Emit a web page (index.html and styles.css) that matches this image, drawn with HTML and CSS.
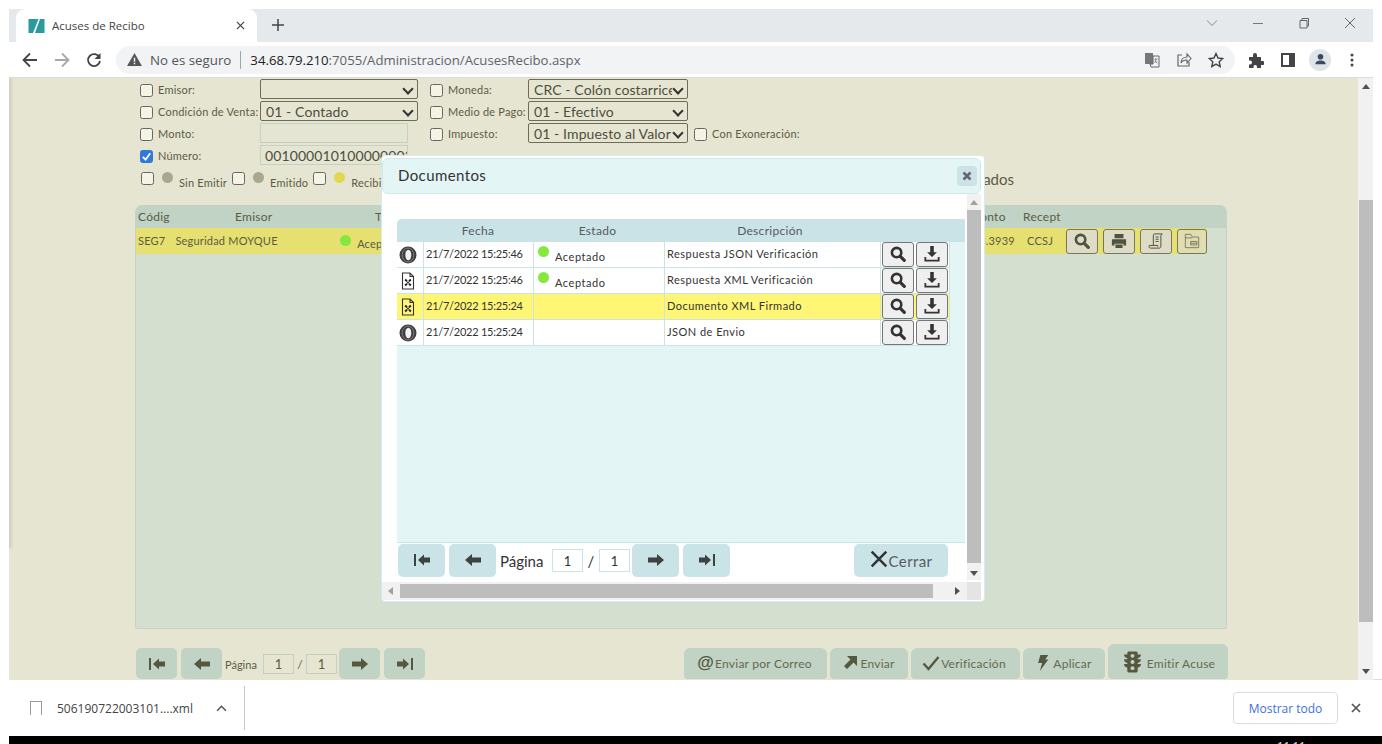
FILE: index.html
```html
<!DOCTYPE html>
<html lang="es">
<head>
<meta charset="utf-8">
<title>Acuses de Recibo</title>
<link rel="stylesheet" href="styles.css">
</head>
<body>
<svg class="defs" aria-hidden="true">
  <symbol id="i-search" viewBox="0 0 16 16"><circle cx="6.6" cy="6.6" r="4.7" fill="none" stroke="currentColor" stroke-width="2.6"/><path d="M10.3 10.3l4 4" stroke="currentColor" stroke-width="3.2" stroke-linecap="round"/></symbol>
  <symbol id="i-down" viewBox="0 0 18 18"><path d="M7 0h4v7h3.500L9 12.500 3.500 7H7z" fill="currentColor"/><path d="M1.500 12.500v4h15v-4" fill="none" stroke="currentColor" stroke-width="2"/></symbol>
  <symbol id="i-first" viewBox="0 0 18 16"><path d="M1 2h2v12H1z M5 8l6-5.500V5.500h6v5h-6v3z" fill="currentColor"/></symbol>
  <symbol id="i-prev" viewBox="0 0 18 16"><path d="M1 8l7-6v3.500h9v5H8V14z" fill="currentColor"/></symbol>
  <symbol id="i-next" viewBox="0 0 18 16"><path d="M17 8l-7-6v3.500H1v5h9V14z" fill="currentColor"/></symbol>
  <symbol id="i-last" viewBox="0 0 18 16"><path d="M17 2h-2v12h2z M13 8L7 2.500V5.500H1v5h6v3z" fill="currentColor"/></symbol>
  <symbol id="i-json" viewBox="0 0 18 18"><circle cx="9" cy="9" r="8.500" fill="#3f3f3f"/><ellipse cx="9" cy="9" rx="5.800" ry="7" fill="none" stroke="#8a8a8a" stroke-width=".8"/><ellipse cx="9.300" cy="9" rx="3" ry="5.200" fill="#f2f2f2"/></symbol>
  <symbol id="i-xml" viewBox="0 0 14 18"><path d="M1.500 1h7.500l3.500 3.500v12.500h-11zM9 1v3.500h3.500" fill="none" stroke="#333" stroke-width="1.100"/><path d="M4.200 7.500l1.800 1.800M9.800 7.500L8 9.300M4.200 13.500L6 11.700M9.800 13.500L8 11.700" stroke="#1d1d1d" stroke-width="1.900"/><circle cx="7" cy="10.500" r="1" fill="#1d1d1d"/></symbol>
  <symbol id="i-print" viewBox="0 0 18 18"><path d="M4 1h10v5H4z M1 7h16v7h-3v-2H4v2H1z M5 13h8v4H5z" fill="currentColor"/></symbol>
  <symbol id="i-bill" viewBox="0 0 18 18"><path d="M6 14V2.500C6 1.500 6.500 1 7.500 1H16l-1.500 2v12c0 1.500-1 2-2 2H3c-1.200 0-2-.8-2-2 0-.5.300-1 1-1h9v1.500M8.500 4.500H12M8.500 7H12M8.500 9.500H12" fill="none" stroke="currentColor" stroke-width="1.100"/></symbol>
  <symbol id="i-folder" viewBox="0 0 18 18"><path d="M1.500 16.500V1.500h6l2 3h7v12zM1.500 5.500h8M7.500 9.500h7v4h-7zM7.500 11.500h7" fill="none" stroke="currentColor" stroke-width="1"/></symbol>
  <symbol id="i-share" viewBox="0 0 14 14"><path d="M4 0h10v10l-3.500-3.500L4 13 1 10l6.500-6.500z" fill="currentColor"/></symbol>
  <symbol id="i-check" viewBox="0 0 18 16"><path d="M1.500 8.500l5 5.500L16.500 2" fill="none" stroke="currentColor" stroke-width="2.400"/></symbol>
  <symbol id="i-bolt" viewBox="0 0 14 18"><path d="M4 0h9L9.500 5H13L3.500 18l2.500-9H1.500z" fill="currentColor"/></symbol>
  <symbol id="i-light" viewBox="0 0 18 22"><path d="M0 3h3.500V1.500C3.500.7 4.200 0 5 0h8c.8 0 1.500.7 1.500 1.500V3H18c0 2-1.500 3.500-3.500 3.800V8H18c0 2-1.500 3.500-3.500 3.800V13H18c0 2-1.500 3.500-3.500 3.800v3.700c0 .8-.7 1.500-1.500 1.500H5c-.8 0-1.500-.7-1.500-1.500v-3.700C1.500 16.500 0 15 0 13h3.500v-1.200C1.500 11.500 0 10 0 8h3.500V6.800C1.500 6.500 0 5 0 3z" fill="currentColor"/><circle cx="9" cy="4.500" r="2.100" fill="#c0d3c5"/><circle cx="9" cy="11" r="2.100" fill="#c0d3c5"/><circle cx="9" cy="17.500" r="2.100" fill="#c0d3c5"/></symbol>
  <symbol id="i-x" viewBox="0 0 16 16"><path d="M1.500 1.500l13 13M14.500 1.500l-13 13" stroke="currentColor" stroke-width="2.200" fill="none"/></symbol>
</svg>

<div class="tabstrip">
  <div class="tab">
    <svg class="favicon" viewBox="0 0 16 16"><path d="M0 1h10L4.500 15H0z" fill="#2a9a9e"/><path d="M11.500 1H16v14H6.500z" fill="#2a9a9e"/></svg>
    <span class="tab-title">Acuses de Recibo</span>
    <svg class="tab-close" viewBox="0 0 10 10"><path d="M1 1l8 8M9 1L1 9" stroke="#444" stroke-width="1.400"/></svg>
  </div>
  <svg class="new-tab" viewBox="0 0 12 12"><path d="M6 0v12M0 6h12" stroke="#444" stroke-width="1.500"/></svg>
  <div class="winctl">
    <svg viewBox="0 0 12 12"><path d="M1 3.500l5 5 5-5" fill="none" stroke="#888" stroke-width="1"/></svg>
    <svg viewBox="0 0 12 12"><path d="M1 6.500h10" stroke="#777" stroke-width="1"/></svg>
    <svg viewBox="0 0 12 12"><path d="M2 3.500h7v7.500H2zM4 3.500V1.500h6.500V9H9" fill="none" stroke="#666" stroke-width="1"/></svg>
    <svg viewBox="0 0 12 12"><path d="M1 1l10 10M11 1L1 11" stroke="#666" stroke-width="1"/></svg>
  </div>
</div>

<div class="toolbar">
  <svg class="nav-ic" viewBox="0 0 16 16"><path d="M15 8H2M8 1.500L1.500 8 8 14.500" fill="none" stroke="#444" stroke-width="1.800"/></svg>
  <svg class="nav-ic" viewBox="0 0 16 16"><path d="M1 8h13M8 1.500L14.500 8 8 14.500" fill="none" stroke="#a8a8a8" stroke-width="1.800"/></svg>
  <svg class="nav-ic" viewBox="0 0 16 16"><path d="M13.500 5.500A6 6 0 1 0 14 9" fill="none" stroke="#444" stroke-width="1.800"/><path d="M14.500 1v6h-6z" fill="#444"/></svg>
  <div class="omnibox">
    <svg class="warn" viewBox="0 0 16 14"><path d="M8 0l8 14H0z" fill="#555"/><path d="M7.200 5h1.600v4.500H7.200zM7.200 10.500h1.600V12H7.200z" fill="#f1f3f4"/></svg>
    <span class="insecure">No es seguro</span>
    <span class="sep"></span>
    <span class="url"><b>34.68.79.210</b>:7055/Administracion/AcusesRecibo.aspx</span>
    <span class="omni-right">
      <svg viewBox="0 0 16 16"><path d="M1 1h8v11H1z" fill="#777"/><path d="M9 4h6v11H7l-1-3h3z" fill="none" stroke="#666"/><path d="M10.500 7h3M12 7c0 2-1 3.500-1.500 4M11 8.500c.5 1 1.500 2 2.500 2.500" fill="none" stroke="#666" stroke-width=".8"/></svg>
      <svg viewBox="0 0 16 16"><path d="M6 3H2v11h11v-4" fill="none" stroke="#666" stroke-width="1.200"/><path d="M5 11c0-4 3-6 6-6V2l4 4.500L11 11V8c-3 0-5 1-6 3z" fill="none" stroke="#666" stroke-width="1.100"/></svg>
      <svg viewBox="0 0 16 16"><path d="M8 1.500l2 4.500 4.800.5-3.600 3.200 1 4.800L8 12.100l-4.200 2.400 1-4.800L1.200 6.500 6 6z" fill="none" stroke="#444" stroke-width="1.400"/></svg>
    </span>
  </div>
  <div class="tool-right">
    <svg viewBox="0 0 16 16"><path d="M1 5h4V3a2 2 0 0 1 4 0v2h4v4h1.500a2 2 0 0 1 0 4H13v3H9v-1.500a1.800 1.800 0 0 0-3.500 0V16H1v-3.500h1a2 2 0 0 0 0-4H1z" fill="#444"/></svg>
    <svg viewBox="0 0 16 16"><path d="M2 2h12v12H2z" fill="none" stroke="#444" stroke-width="2"/><path d="M9 2h5v12H9z" fill="#444"/></svg>
    <span class="avatar"><svg viewBox="0 0 16 16"><circle cx="8" cy="5" r="3" fill="#3c4a5e"/><path d="M2.500 13c0-3 3-4 5.500-4s5.500 1 5.500 4z" fill="#3c4a5e"/></svg></span>
    <svg viewBox="0 0 16 16"><circle cx="8" cy="3" r="1.500" fill="#444"/><circle cx="8" cy="8" r="1.500" fill="#444"/><circle cx="8" cy="13" r="1.500" fill="#444"/></svg>
  </div>
</div>

<div class="viewport">
  <main class="page">
    <div class="filters">
      <label class="flabel"><span class="check"></span>Emisor:</label>
      <div class="fcell"><div class="select"><span></span></div></div>
      <label class="flabel"><span class="check"></span>Moneda:</label>
      <div class="select"><span>CRC - Colón costarricense</span></div>
      <span></span>

      <label class="flabel"><span class="check"></span>Condición de Venta:</label>
      <div class="fcell"><div class="select"><span>01 - Contado</span></div></div>
      <label class="flabel"><span class="check"></span>Medio de Pago:</label>
      <div class="select"><span>01 - Efectivo</span></div>
      <span></span>

      <label class="flabel"><span class="check"></span>Monto:</label>
      <div class="fcell"><div class="input"></div></div>
      <label class="flabel"><span class="check"></span>Impuesto:</label>
      <div class="select"><span>01 - Impuesto al Valor Agregado</span></div>
      <label class="flabel"><span class="check"></span>Con Exoneración:</label>

      <label class="flabel"><span class="check checked"><svg viewBox="0 0 12 12"><path d="M2 6.500l3 3 5-7" fill="none" stroke="#fff" stroke-width="2"/></svg></span>Número:</label>
      <div class="fcell"><div class="input"><span>00100001010000000370</span></div></div>
    </div>

    <div class="states">
      <span class="check"></span><span class="dot dot-grey"></span><span class="state-label">Sin Emitir</span>
      <span class="check"></span><span class="dot dot-grey"></span><span class="state-label">Emitido</span>
      <span class="check"></span><span class="dot dot-yellow"></span><span class="state-label">Recibido</span>
      <span class="results">Resultados</span>
    </div>

    <section class="panel">
      <div class="panel-head">
        <span class="c-code">Códig</span><span class="c-emisor">Emisor</span><span class="c-tipo">Tipo</span><span class="c-monto">Monto</span><span class="c-recept">Recept</span>
      </div>
      <div class="panel-row">
        <span class="c-code">SEG7</span><span class="c-seller">Seguridad MOYQUE</span><span class="c-status"><span class="dot dot-green"></span><span class="status-text">Aceptado</span></span><span class="c-amount">3.3939</span><span class="c-rec">CCSJ</span>
        <span class="row-actions">
          <span class="act"><svg><use href="#i-search"/></svg></span>
          <span class="act"><svg><use href="#i-print"/></svg></span>
          <span class="act"><svg><use href="#i-bill"/></svg></span>
          <span class="act act-light"><svg><use href="#i-folder"/></svg></span>
        </span>
      </div>
    </section>

    <footer class="bottom">
      <span class="pbtn"><svg><use href="#i-first"/></svg></span>
      <span class="pbtn"><svg><use href="#i-prev"/></svg></span>
      <span class="plabel">Página</span>
      <span class="pinput">1</span><span class="pslash">/</span><span class="pinput">1</span>
      <span class="pbtn pbtn-next"><svg><use href="#i-next"/></svg></span>
      <span class="pbtn"><svg><use href="#i-last"/></svg></span>
      <span class="actions">
        <span class="abtn a1"><span class="at">@</span>Enviar por Correo</span>
        <span class="abtn a2"><svg class="ic14"><use href="#i-share"/></svg>Enviar</span>
        <span class="abtn a3"><svg class="ic16"><use href="#i-check"/></svg>Verificación</span>
        <span class="abtn a4"><svg class="ic14"><use href="#i-bolt"/></svg>Aplicar</span>
        <span class="abtn a5"><svg class="ic-light"><use href="#i-light"/></svg>Emitir Acuse</span>
      </span>
    </footer>
  </main>

  <div class="scrollbar">
    <span class="arrow-up"></span>
    <span class="thumb"></span>
    <span class="arrow-down"></span>
  </div>

  <div class="modal">
    <header class="modal-head">
      <span class="modal-title">Documentos</span>
      <span class="modal-close"><svg viewBox="0 0 10 10"><path d="M1.500 1.500l7 7M8.500 1.500l-7 7" stroke="#667" stroke-width="2.600"/></svg></span>
    </header>
    <div class="modal-mid">
      <div class="modal-body">
        <div class="doc-area">
          <div class="doc-head"><span></span><span>Fecha</span><span>Estado</span><span>Descripción</span></div>
          <div class="doc-row">
            <span class="cell cell-ic"><svg class="ic18"><use href="#i-json"/></svg></span>
            <span class="cell cell-date">21/7/2022 15:25:46</span>
            <span class="cell cell-st"><span class="dot dot-green"></span><span class="st-text">Aceptado</span></span>
            <span class="cell cell-desc">Respuesta JSON Verificación</span>
            <span class="cell cell-btn"><span class="rbtn"><svg><use href="#i-search"/></svg></span><span class="rbtn"><svg><use href="#i-down"/></svg></span></span>
          </div>
          <div class="doc-row">
            <span class="cell cell-ic"><svg class="ic-xml"><use href="#i-xml"/></svg></span>
            <span class="cell cell-date">21/7/2022 15:25:46</span>
            <span class="cell cell-st"><span class="dot dot-green"></span><span class="st-text">Aceptado</span></span>
            <span class="cell cell-desc">Respuesta XML Verificación</span>
            <span class="cell cell-btn"><span class="rbtn"><svg><use href="#i-search"/></svg></span><span class="rbtn"><svg><use href="#i-down"/></svg></span></span>
          </div>
          <div class="doc-row doc-row-sel">
            <span class="cell cell-ic"><svg class="ic-xml"><use href="#i-xml"/></svg></span>
            <span class="cell cell-date">21/7/2022 15:25:24</span>
            <span class="cell"></span>
            <span class="cell cell-desc">Documento XML Firmado</span>
            <span class="cell cell-btn"><span class="rbtn"><svg><use href="#i-search"/></svg></span><span class="rbtn"><svg><use href="#i-down"/></svg></span></span>
          </div>
          <div class="doc-row">
            <span class="cell cell-ic"><svg class="ic18"><use href="#i-json"/></svg></span>
            <span class="cell cell-date">21/7/2022 15:25:24</span>
            <span class="cell"></span>
            <span class="cell cell-desc">JSON de Envio</span>
            <span class="cell cell-btn"><span class="rbtn"><svg><use href="#i-search"/></svg></span><span class="rbtn"><svg><use href="#i-down"/></svg></span></span>
          </div>
        </div>
        <div class="modal-pager">
          <span class="mbtn"><svg><use href="#i-first"/></svg></span>
          <span class="mbtn"><svg><use href="#i-prev"/></svg></span>
          <span class="mlabel">Página</span>
          <span class="minput">1</span><span class="mslash">/</span><span class="minput">1</span>
          <span class="mbtn"><svg><use href="#i-next"/></svg></span>
          <span class="mbtn"><svg><use href="#i-last"/></svg></span>
          <span class="mclose"><svg><use href="#i-x"/></svg>Cerrar</span>
        </div>
      </div>
      <div class="mscroll-v"><span class="arrow-up"></span><span class="thumb"></span><span class="arrow-down"></span></div>
    </div>
    <div class="mscroll-h"><span class="arrow-left"></span><span class="thumb-h"></span><span class="arrow-right"></span><span class="corner"></span></div>
  </div>
</div>

<div class="downloads">
  <div class="dl-item">
    <span class="dl-file"></span>
    <span class="dl-name">506190722003101....xml</span>
    <svg class="dl-chev" viewBox="0 0 12 8"><path d="M1 6.500l5-5 5 5" fill="none" stroke="#555" stroke-width="1.800"/></svg>
  </div>
  <span class="dl-show">Mostrar todo</span>
  <svg class="dl-x" viewBox="0 0 10 10"><path d="M1 1l8 8M9 1L1 9" stroke="#555" stroke-width="1.700"/></svg>
</div>
<div class="taskbar"><span>11:11</span></div>
</body>
</html>
```

FILE: styles.css
```css
* { box-sizing: border-box; }
html, body { margin: 0; height: 744px; overflow: hidden; background: #fff; }
body {
  width: 1382px;
  padding-top: 9px;
  font-family: "Lato", "Liberation Sans", sans-serif;
  display: flex;
  flex-direction: column;
}
svg { display: block; }
.defs { position: absolute; width: 0; height: 0; }

/* Browser chrome */
.tabstrip {
  height: 33px;
  margin-left: 9px;
  margin-right: 9px;
  background: #e6e9ec;
  display: flex;
  align-items: stretch;
  flex: none;
}
.tab {
  margin-left: 7px;
  background: #fff;
  border-radius: 9px 9px 0 0;
  display: flex;
  align-items: center;
  padding: 0 0 0 12px;
  width: 241px;
}
.favicon { width: 17px; height: 16px; flex: none; }
.tab-title { margin-left: 7px; font: 11.500px "Open Sans", sans-serif; color: #444; width: 184px; }
.tab-close { width: 9px; height: 9px; }
.new-tab { width: 12px; height: 12px; margin: 10px 0 0 15px; }
.winctl { margin-left: auto; display: flex; gap: 34px; align-items: flex-start; padding: 8px 17px 0 0; }
.winctl svg { width: 12px; height: 12px; }

.toolbar {
  height: 36px;
  margin: 0 9px;
  flex: none;
  display: flex;
  align-items: center;
  padding-left: 13px;
  background: #fff;
  border-bottom: 1px solid #dadce0;
  gap: 16px;
}
.nav-ic { width: 16px; height: 16px; flex: none; }
.omnibox {
  width: 1119px;
  height: 28px;
  margin-left: -2px;
  background: #f1f3f4;
  border-radius: 14px;
  display: flex;
  align-items: center;
  padding-left: 11px;
  font: 14px "Open Sans", sans-serif;
  color: #555;
}
.warn { width: 15px; height: 13px; flex: none; }
.insecure { margin-left: 8px; font-size: 13.300px; }
.sep { width: 1px; height: 18px; background: #9aa; margin: 0 9px; }
.url { font-size: 13.200px; color: #5f6368; white-space: nowrap; }
.url b { font-weight: 400; color: #222; }
.omni-right { margin-left: auto; display: flex; gap: 16px; padding-right: 11px; }
.omni-right svg { width: 16px; height: 16px; }
.tool-right { display: flex; align-items: center; gap: 16px; margin-left: -3px; }
.tool-right > svg { width: 16px; height: 16px; }
.avatar { width: 22px; height: 22px; border-radius: 50%; background: #dfe3ea; display: flex; align-items: center; justify-content: center; margin: 0 -3px; }
.avatar svg { width: 15px; height: 15px; }

/* Viewport */
.viewport {
  position: relative;
  height: 602px;
  margin-left: 9px;
  width: 1364px;
  display: flex;
  flex: none;
  overflow: hidden;
}
.page {
  width: 1349px;
  height: 602px;
  background: linear-gradient(to right, #cfcfbc, #e6e5d2) 0 0 / 5px 470px no-repeat, #e6e5d2;
  color: #5c5c44;
  display: flex;
  flex-direction: column;
  padding-left: 126px;
}
.filters {
  display: grid;
  grid-template-columns: 120px 170px 98px 166px 150px;
  grid-auto-rows: 22px;
  padding: 1px 0 0 5px;
  flex: none;
}
.flabel { display: flex; align-items: center; font-size: 11px; letter-spacing: .2px; white-space: nowrap; padding-bottom: 2px; }
.check {
  width: 13px;
  height: 13px;
  border: 1px solid #666;
  border-radius: 2.500px;
  background: #f4f3e4;
  margin-right: 5px;
  flex: none;
  display: inline-block;
}
.flabel .check { margin-top: 2px; }
.checked { background: #2f7ad8; border-color: #2f7ad8; }
.checked svg { width: 11px; height: 11px; }
.fcell { width: 158px; }
.select, .input {
  height: 20px;
  font-size: 14px;
  letter-spacing: .1px;
  color: #4e4e3c;
  overflow: hidden;
  white-space: nowrap;
  display: flex;
  align-items: center;
  padding-left: 5px;
}
.select {
  width: 160px;
  border: 1px solid #6c6c58;
  border-radius: 2px;
  padding-right: 15px;
  background: #e6e5d2;
  position: relative;
}
.fcell .select { width: 158px; }
.select span { overflow: hidden; flex: 1; }
.select::after {
  content: "";
  position: absolute;
  right: 5px;
  top: 5px;
  width: 6px;
  height: 6px;
  border: solid #333;
  border-width: 0 2px 2px 0;
  transform: rotate(45deg);
}
.input { width: 148px; border: 1px solid #c4d2bf; background: #e4e5d3; padding-left: 4px; }
.input span { overflow: hidden; }

.states {
  display: flex;
  align-items: flex-start;
  margin-top: 4px;
  padding-left: 6px;
  height: 34px;
  font-size: 11px;
  flex: none;
}
.states .check { margin: 1px 8px 0 0; }
.states .dot { margin-top: 1px; }
.dot { display: inline-block; width: 11px; height: 11px; border-radius: 50%; flex: none; }
.dot-grey { background: #a8a890; }
.dot-yellow { background: #e0d94e; }
.dot-green { background: #84e83e; }
.state-label { margin: 5px 5px 0 6px; letter-spacing: .2px; white-space: nowrap; }
.results { margin-left: auto; margin-right: 344px; font-size: 15px; margin-top: -1px; }

.panel {
  width: 1092px;
  height: 424px;
  background: #d4dfcf;
  border: 1px solid #c4d4c4;
  border-top: 0;
  border-radius: 7px 7px 3px 3px;
  overflow: hidden;
  flex: none;
}
.panel-head {
  height: 23px;
  background: #c0d3c5;
  display: grid;
  grid-template-columns: 97px 140px 594px 54px 1fr;
  align-items: center;
  padding-left: 2px;
  font-size: 12px;
  letter-spacing: .25px;
}
.panel-row {
  height: 26px;
  width: 1071px;
  background: #e5e070;
  display: flex;
  align-items: center;
  padding-left: 2px;
  font-size: 11px;
  letter-spacing: .2px;
  white-space: nowrap;
}
.c-seller { margin-left: 10px; width: 165px; margin-top: -2px; }
.c-code { line-height: 1; }
.panel-row .c-code { margin-top: -2px; }
.c-status { width: 640px; display: flex; align-items: center; }
.c-status .dot { margin-top: -2px; }
.status-text { margin: 4px 0 0 6px; }
.c-amount { width: 48px; margin-top: -2px; }
.c-rec { width: 39px; margin-top: -2px; }
.row-actions { display: flex; gap: 5px; }
.act {
  width: 32px;
  height: 25px;
  border: 1px solid #77775f;
  border-radius: 3px;
  background: #dedcc6;
  display: flex;
  align-items: center;
  justify-content: center;
  color: #4f5340;
}
.act svg { width: 16px; height: 16px; }
.act-light { width: 30px; color: #77775f; background: #e0ddb0; }

.bottom {
  margin-top: auto;
  margin-bottom: 1px;
  height: 35px;
  width: 1093px;
  display: flex;
  align-items: flex-end;
  color: #5c5c44;
  flex: none;
  padding-left: 1px;
}
.pbtn {
  width: 41px;
  height: 31px;
  margin-right: 4px;
  background: #c0d3c5;
  border-radius: 5px;
  display: flex;
  align-items: center;
  justify-content: center;
  color: #55583f;
}
.pbtn svg { width: 18px; height: 16px; }
.pbtn-next { margin-left: 2px; }
.plabel { font-size: 11px; margin-right: 3px; align-self: center; padding-top: 6px; width: 35px; margin-left: -1px; }
.pinput {
  width: 31px;
  height: 20px;
  margin-bottom: 5px;
  border: 1px solid #c4d2bf;
  display: flex;
  align-items: center;
  justify-content: center;
  font-size: 13px;
}
.pslash { width: 12px; text-align: center; margin-bottom: 7px; font-size: 12px; }
.actions { margin-left: auto; display: flex; gap: 3px; align-items: flex-end; }
.abtn {
  height: 31px;
  background: #c0d3c5;
  border-radius: 6px 6px 4px 4px;
  display: flex;
  align-items: center;
  justify-content: center;
  gap: 3px;
  font-size: 12px;
  letter-spacing: .25px;
  white-space: nowrap;
  color: #666850;
}
.a1 { width: 143px; gap: 1px; padding-right: 2px; }
.a2 { width: 78px; }
.a3 { width: 109px; gap: 1px; padding-right: 3px; }
.a4 { width: 82px; }
.a5 { width: 120px; height: 35px; gap: 6px; padding: 3px 0 0 3px; }
.a5 svg { margin-top: -3px; }
.at { font: 700 17px "Liberation Sans", sans-serif; color: #55583f; margin-top: -2px; }
.ic14 { width: 14px; height: 16px; color: #55583f; margin-top: -2px; }
.ic16 { width: 18px; height: 16px; color: #55583f; margin-top: -2px; }
.ic-light { width: 17px; height: 22px; color: #55583f; }

.scrollbar {
  width: 15px;
  height: 602px;
  background: #f1f1f1;
  display: flex;
  flex-direction: column;
  align-items: center;
  flex: none;
}
.scrollbar .arrow-up { margin-top: 6px; }
.scrollbar .thumb { margin-top: 111px; height: 422px; width: 14px; background: #bdbdbd; }
.scrollbar .arrow-down { margin-top: auto; margin-bottom: 6px; }
.arrow-up, .arrow-down, .arrow-left, .arrow-right { width: 0; height: 0; display: block; border: solid transparent; }
.arrow-up { border-width: 0 4px 5px; border-bottom-color: #505050; }
.arrow-down { border-width: 5px 4px 0; border-top-color: #505050; }
.arrow-left { border-width: 4px 5px 4px 0; border-right-color: #a0a0a0; }
.arrow-right { border-width: 4px 0 4px 5px; border-left-color: #505050; }

/* Modal */
.modal {
  position: absolute;
  left: 372px;
  top: 77px;
  width: 604px;
  height: 447px;
  background: #fff;
  border: 1px solid #d4ecec;
  border-radius: 4px;
  padding: 2px 3px 2px 0;
  display: flex;
  flex-direction: column;
  color: #333;
}
.modal-head {
  height: 36px;
  background: #e3f5f5;
  border: 1px solid #cfe8e8;
  border-radius: 6px;
  display: flex;
  align-items: center;
  justify-content: space-between;
  padding: 0 3px 0 15px;
  flex: none;
}
.modal-title { font-size: 15px; letter-spacing: .4px; color: #333; margin-top: -2px; }
.modal-close {
  width: 20px;
  height: 20px;
  background: #c9e3e7;
  border-radius: 4px;
  display: flex;
  align-items: center;
  justify-content: center;
}
.modal-close svg { width: 10px; height: 10px; }
.modal-mid { display: flex; height: 388px; flex: none; }
.modal-body { width: 585px; padding: 25px 0 0 15px; flex: none; }
.doc-area { width: 568px; height: 324px; background: #e3f5f5; border-bottom: 1px solid #c9e3e7; border-radius: 5px 0 0 0; overflow: hidden; }
.doc-head {
  height: 23px;
  background: #c9e3e7;
  display: grid;
  grid-template-columns: 26px 110px 129px 216px;
  align-items: center;
  text-align: center;
  font-size: 12px;
  letter-spacing: .3px;
  color: #5a5a62;
}
.doc-row {
  height: 26px;
  width: 553px;
  display: grid;
  grid-template-columns: 27px 110px 131px 216px 69px;
  background: #fff;
  font-size: 11px;
  letter-spacing: .15px;
  white-space: nowrap;
  border-bottom: 1px solid #c9e3e7;
}
.doc-row-sel { background: #fff675; }
.cell { display: flex; align-items: center; padding: 0 0 2px 2px; border-right: 1px solid #c9e3e7; overflow: hidden; }
.cell-date { letter-spacing: -.25px; }
.cell-desc { letter-spacing: .47px; }
.cell-ic { padding: 0 0 0 2px; border-left: 0; }
.cell-st { align-items: flex-start; padding-left: 4px; }
.cell-st .dot { margin-top: 4px; }
.st-text { margin: 8px 0 0 6px; letter-spacing: .55px; }
.cell-btn { padding: 0 0 0 1px; gap: 2px; }
.ic18 { width: 18px; height: 18px; }
.ic-xml { width: 14px; height: 18px; margin-left: 2px; }
.rbtn {
  width: 32px;
  height: 25px;
  background: #efefef;
  border: 1px solid #767676;
  border-radius: 3px;
  display: flex;
  align-items: center;
  justify-content: center;
  color: #333;
  flex: none;
}
.rbtn svg { width: 16px; height: 16px; margin-top: -2px; }
.modal-pager { display: flex; align-items: center; height: 33px; margin-top: 1px; padding-left: 1px; font-size: 15px; }
.mbtn {
  width: 47px;
  height: 33px;
  background: #c9e3e7;
  border-radius: 5px;
  margin-right: 4px;
  display: flex;
  align-items: center;
  justify-content: center;
  color: #3c4240;
}
.mbtn svg { width: 18px; height: 16px; margin-top: -2px; }
.mlabel { margin-right: 4px; width: 48px; }
.minput {
  width: 31px;
  height: 23px;
  border: 1px solid #c9e3e7;
  display: flex;
  align-items: center;
  justify-content: center;
  font-size: 13px;
}
.mslash { width: 16px; text-align: center; }
.minput + .mslash + .minput { margin-right: 2px; }
.mclose {
  margin-left: 120px;
  width: 94px;
  height: 33px;
  background: #c9e3e7;
  border-radius: 5px;
  display: flex;
  align-items: center;
  justify-content: center;
  gap: 1px;
  letter-spacing: .4px;
  color: #5a5a62;
}
.mclose svg { width: 18px; height: 18px; color: #333; margin-top: -3px; }
.mscroll-v { width: 14px; height: 386px; background: #f1f1f1; display: flex; flex-direction: column; align-items: center; flex: none; }
.mscroll-v .arrow-up { margin: 6px 0 5px; border-bottom-color: #a0a0a0; }
.mscroll-v .thumb { width: 14px; height: 353px; background: #bdbdbd; }
.mscroll-v .arrow-down { margin-top: auto; margin-bottom: 4px; }
.mscroll-h { height: 18px; background: #f1f1f1; display: flex; align-items: center; flex: none; }
.mscroll-h .arrow-left { margin: 0 7px 0 6px; }
.thumb-h { width: 533px; height: 14px; background: #bdbdbd; }
.mscroll-h .arrow-right { margin-left: 22px; }
.corner { margin-left: auto; width: 14px; height: 18px; background: #e4e4e4; }

/* Download bar */
.downloads {
  height: 57px;
  margin-left: 9px;
  margin-top: -1px;
  background: #fff;
  border-top: 1px solid #dadce0;
  display: flex;
  align-items: center;
  flex: none;
  padding-right: 21px;
  font: 12px "Open Sans", sans-serif;
}
.dl-item {
  width: 236px;
  height: 44px;
  border-right: 1px solid #c8c8c8;
  display: flex;
  align-items: center;
  padding-left: 21px;
  color: #444;
}
.dl-file { width: 12px; height: 14px; border: 1px solid #999; border-bottom: 0; flex: none; }
.dl-name { margin-left: 15px; width: 164px; }
.dl-chev { width: 11px; height: 7px; margin-left: -5px; }
.dl-show {
  margin-left: auto;
  width: 105px;
  height: 32px;
  border: 1px solid #dadce0;
  border-radius: 4px;
  color: #3f6fe0;
  display: flex;
  align-items: center;
  justify-content: center;
}
.dl-x { width: 10px; height: 10px; margin-left: 13px; }
.taskbar {
  flex: 1;
  margin-left: 9px;
  background: #000;
  overflow: hidden;
  color: #ddd;
  font-size: 11px;
  padding: 3px 0 0 1268px;
}
```
